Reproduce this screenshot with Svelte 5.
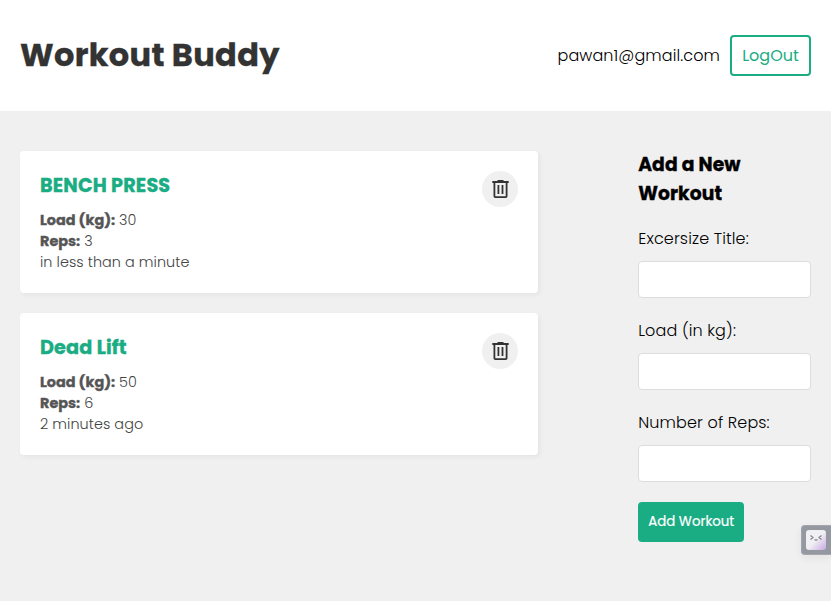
<script>
  const workouts = [
    { title: 'BENCH PRESS', load: 30, reps: 3, created: 'in less than a minute' },
    { title: 'Dead Lift', load: 50, reps: 6, created: '2 minutes ago' }
  ];
  const fields = [
    { id: 'title', label: 'Excersize Title:', type: 'text' },
    { id: 'load', label: 'Load (in kg):', type: 'number' },
    { id: 'reps', label: 'Number of Reps:', type: 'number' }
  ];
</script>

<div class="app">
  <header>
    <h1>Workout Buddy</h1>
    <nav>
      <span class="email">pawan1@gmail.com</span>
      <button class="logout">LogOut</button>
    </nav>
  </header>

  <main>
    <section class="workouts">
      {#each workouts as w}
        <article>
          <div class="details">
            <h4>{w.title}</h4>
            <p><strong>Load (kg):</strong>{' '}{w.load}</p>
            <p><strong>Reps:</strong>{' '}{w.reps}</p>
            <p>{w.created}</p>
          </div>
          <button class="delete" aria-label="Delete workout">
            <svg width="24" height="24" viewBox="0 0 24 24" fill="#333">
              <path fill-rule="evenodd" d="M9.500 3h6v1H20.700v2H19.500V19.200q0 1.800-1.800 1.800H7.300q-1.800 0-1.800-1.800V6H4.300V4h5.200zM7.300 6v13.200h10.400V6zM9.500 8h1.800v9H9.500zM13.600 8h1.800v9h-1.800z" />
            </svg>
          </button>
        </article>
      {/each}
    </section>

    <form onsubmit={(e) => e.preventDefault()}>
      <h3>Add a New Workout</h3>
      {#each fields as f}
        <label for={f.id}>{f.label}</label>
        <input id={f.id} type={f.type} />
      {/each}
      <button class="submit">Add Workout</button>
    </form>
  </main>

  <aside>
    <svg width="20" height="20" viewBox="0 0 20 20">
      <defs>
        <linearGradient id="face" x1="0" y1="0" x2="1" y2="1">
          <stop offset="0.5" stop-color="#f0eff3" />
          <stop offset="1" stop-color="#c9a8e4" />
        </linearGradient>
      </defs>
      <rect width="20" height="20" rx="3" fill="url(#face)" />
      <path d="M4.500 5.500l2.500 2-2.500 2M15.500 5.500l-2.500 2 2.500 2M8.500 9.500q1.500 1.200 3 0" fill="none" stroke="#85828b" stroke-width="1.200" />
    </svg>
  </aside>
</div>

<style>
  :global(body) { margin: 0; background: #f0f0f0; }
  .app {
    position: relative;
    height: 601px;
    overflow: hidden;
    background: #f0f0f0;
    font-family: Poppins, Inter, sans-serif;
    font-size: 16px;
    color: #000;
  }
  .app * { box-sizing: border-box; }
  h1, h3, h4, p { margin: 0; }
  h1, h3, h4, strong { -webkit-text-stroke: 0.35px currentColor; }
  button { font: inherit; cursor: pointer; }
  header {
    height: 111px;
    padding: 0 20px 2px;
    background: #fff;
    display: flex;
    align-items: center;
    justify-content: space-between;
  }
  h1 { font-size: 32px; line-height: 48px; font-weight: 700; letter-spacing: 0.32px; color: #333; }
  nav { display: flex; align-items: center; padding-top: 2px; }
  .email { margin-right: 10px; font-weight: 300; letter-spacing: 0.1px; }
  .logout {
    width: 81px;
    height: 41px;
    padding: 0;
    border: 2px solid #1aac83;
    border-radius: 4px;
    background: #fff;
    color: #1aac83;
  }
  main {
    display: grid;
    grid-template-columns: 3fr 1fr;
    gap: 100px;
    padding: 40px 20px 0;
  }
  article {
    display: flex;
    justify-content: space-between;
    height: 142px;
    margin-bottom: 20px;
    padding: 20px;
    background: #fff;
    border-radius: 4px;
    box-shadow: 2px 2px 5px rgba(0, 0, 0, 0.05);
  }
  h4 { margin-bottom: 10px; font-size: 19.2px; line-height: 29px; font-weight: 700; letter-spacing: 0.15px; color: #1aac83; }
  p { font-size: 14.4px; line-height: 21px; font-weight: 300; letter-spacing: 0.06px; color: #444; }
  p strong { font-weight: 700; letter-spacing: 0; color: #555; }
  .delete {
    width: 36px;
    height: 36px;
    padding: 6px;
    border: 0;
    border-radius: 50%;
    background: #f0f0f0;
  }
  .delete svg { display: block; }
  h3 { margin: -1px 0 18px; font-size: 18.72px; line-height: 29px; font-weight: 700; letter-spacing: 0.08px; }
  label { display: block; height: 25px; line-height: 25px; font-weight: 300; letter-spacing: 0.13px; }
  input {
    display: block;
    width: 100%;
    height: 37px;
    margin: 10px 0 20px;
    padding: 10px;
    border: 1px solid #ddd;
    border-radius: 4px;
    background: #fff;
  }
  .submit {
    display: block;
    width: 106px;
    height: 40px;
    padding: 0;
    border: 0;
    border-radius: 4px;
    background: #1aac83;
    color: #fff;
    font-size: 13.333px;
    -webkit-text-stroke: 0.2px #fff;
  }
  aside {
    position: absolute;
    right: 0;
    top: 525px;
    width: 30px;
    height: 30px;
    padding: 4px;
    border: 1px solid #a3a6ad;
    border-right: 0;
    border-radius: 4px 0 0 4px;
    background: #9498a0;
    box-shadow: 0 3px 10px rgba(0, 0, 0, 0.06);
  }
  aside svg { display: block; }
</style>
